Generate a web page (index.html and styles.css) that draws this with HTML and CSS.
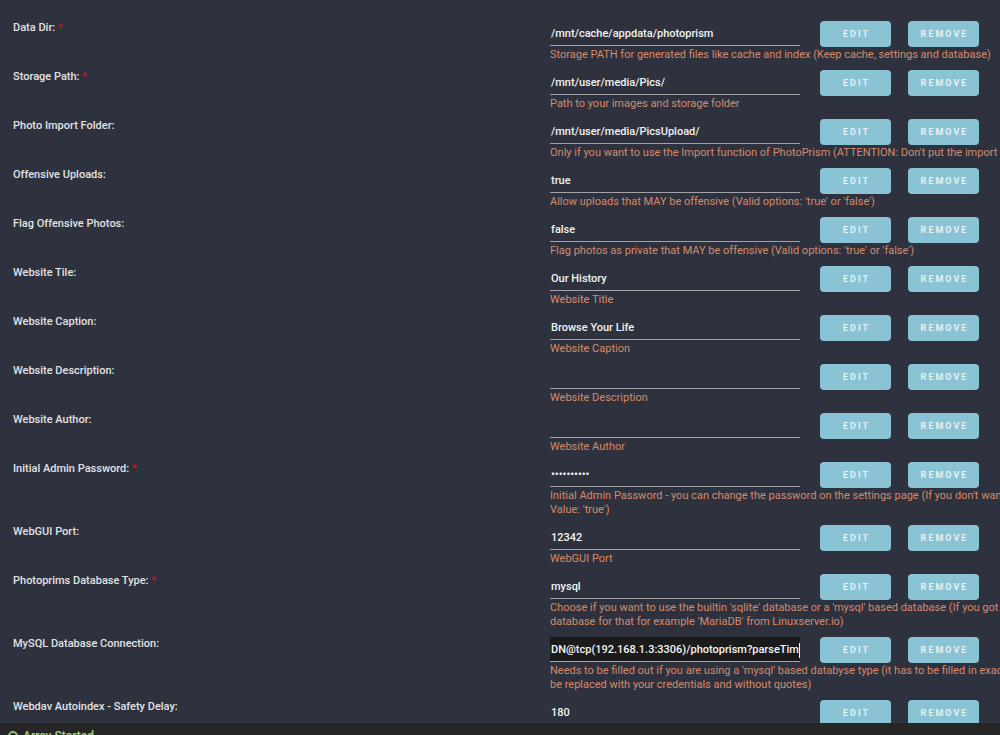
FILE: index.html
```html
<!DOCTYPE html>
<html>
<head>
  <title>Update Container</title>
  <link rel="stylesheet" href="styles.css">
</head>
<body>
  <div class="settings">

    <div class="setting">
      <div class="setting-label">Data Dir: <span class="required">*</span></div>
      <div class="setting-body">
        <div class="setting-top">
          <div class="setting-value">/mnt/cache/appdata/photoprism</div>
          <button class="btn">Edit</button>
          <button class="btn">Remove</button>
        </div>
        <div class="setting-desc">Storage PATH for generated files like cache and index (Keep cache, settings and database)</div>
      </div>
    </div>

    <div class="setting">
      <div class="setting-label">Storage Path: <span class="required">*</span></div>
      <div class="setting-body">
        <div class="setting-top">
          <div class="setting-value">/mnt/user/media/Pics/</div>
          <button class="btn">Edit</button>
          <button class="btn">Remove</button>
        </div>
        <div class="setting-desc">Path to your images and storage folder</div>
      </div>
    </div>

    <div class="setting">
      <div class="setting-label">Photo Import Folder:</div>
      <div class="setting-body">
        <div class="setting-top">
          <div class="setting-value">/mnt/user/media/PicsUpload/</div>
          <button class="btn">Edit</button>
          <button class="btn">Remove</button>
        </div>
        <div class="setting-desc">Only if you want to use the Import function of PhotoPrism (ATTENTION: Don't put the import folder inside the originals folder)</div>
      </div>
    </div>

    <div class="setting">
      <div class="setting-label">Offensive Uploads:</div>
      <div class="setting-body">
        <div class="setting-top">
          <div class="setting-value">true</div>
          <button class="btn">Edit</button>
          <button class="btn">Remove</button>
        </div>
        <div class="setting-desc">Allow uploads that MAY be offensive (Valid options: 'true' or 'false')</div>
      </div>
    </div>

    <div class="setting">
      <div class="setting-label">Flag Offensive Photos:</div>
      <div class="setting-body">
        <div class="setting-top">
          <div class="setting-value">false</div>
          <button class="btn">Edit</button>
          <button class="btn">Remove</button>
        </div>
        <div class="setting-desc">Flag photos as private that MAY be offensive (Valid options: 'true' or 'false')</div>
      </div>
    </div>

    <div class="setting">
      <div class="setting-label">Website Tile:</div>
      <div class="setting-body">
        <div class="setting-top">
          <div class="setting-value">Our History</div>
          <button class="btn">Edit</button>
          <button class="btn">Remove</button>
        </div>
        <div class="setting-desc">Website Title</div>
      </div>
    </div>

    <div class="setting">
      <div class="setting-label">Website Caption:</div>
      <div class="setting-body">
        <div class="setting-top">
          <div class="setting-value">Browse Your Life</div>
          <button class="btn">Edit</button>
          <button class="btn">Remove</button>
        </div>
        <div class="setting-desc">Website Caption</div>
      </div>
    </div>

    <div class="setting">
      <div class="setting-label">Website Description:</div>
      <div class="setting-body">
        <div class="setting-top">
          <div class="setting-value"></div>
          <button class="btn">Edit</button>
          <button class="btn">Remove</button>
        </div>
        <div class="setting-desc">Website Description</div>
      </div>
    </div>

    <div class="setting">
      <div class="setting-label">Website Author:</div>
      <div class="setting-body">
        <div class="setting-top">
          <div class="setting-value"></div>
          <button class="btn">Edit</button>
          <button class="btn">Remove</button>
        </div>
        <div class="setting-desc">Website Author</div>
      </div>
    </div>

    <div class="setting">
      <div class="setting-label">Initial Admin Password: <span class="required">*</span></div>
      <div class="setting-body">
        <div class="setting-top">
          <div class="setting-value password">&bull;&bull;&bull;&bull;&bull;&bull;&bull;&bull;&bull;&bull;</div>
          <button class="btn">Edit</button>
          <button class="btn">Remove</button>
        </div>
        <div class="setting-desc">Initial Admin Password - you can change the password on the settings page (If you don't want a password set this to Public and the<br>Value: 'true')</div>
      </div>
    </div>

    <div class="setting">
      <div class="setting-label">WebGUI Port:</div>
      <div class="setting-body">
        <div class="setting-top">
          <div class="setting-value">12342</div>
          <button class="btn">Edit</button>
          <button class="btn">Remove</button>
        </div>
        <div class="setting-desc">WebGUI Port</div>
      </div>
    </div>

    <div class="setting">
      <div class="setting-label">Photoprims Database Type: <span class="required">*</span></div>
      <div class="setting-body">
        <div class="setting-top">
          <div class="setting-value">mysql</div>
          <button class="btn">Edit</button>
          <button class="btn">Remove</button>
        </div>
        <div class="setting-desc">Choose if you want to use the builtin 'sqlite' database or a 'mysql' based database (If you got no database you have to setup a<br>database for that for example 'MariaDB' from Linuxserver.io)</div>
      </div>
    </div>

    <div class="setting">
      <div class="setting-label">MySQL Database Connection:</div>
      <div class="setting-body">
        <div class="setting-top">
          <div class="setting-value focused">DN@tcp(192.168.1.3:3306)/photoprism?parseTim<span class="caret"></span></div>
          <button class="btn">Edit</button>
          <button class="btn">Remove</button>
        </div>
        <div class="setting-desc">Needs to be filled out if you are using a 'mysql' based databyse type (it has to be filled in exactly like that, the USER and PASSWORD have to<br>be replaced with your credentials and without quotes)</div>
      </div>
    </div>

    <div class="setting">
      <div class="setting-label">Webdav Autoindex - Safety Delay:</div>
      <div class="setting-body">
        <div class="setting-top">
          <div class="setting-value">180</div>
          <button class="btn">Edit</button>
          <button class="btn">Remove</button>
        </div>
        <div class="setting-desc">Safety delay for Webdav autoindex</div>
      </div>
    </div>

  </div>

  <div class="footer">
    <span class="status-dot"></span>
    <span class="status-text">Array Started</span>
  </div>
</body>
</html>
```

FILE: styles.css
```css
body {
  margin: 0;
  padding: 21px 0 0 0;
  background-color: #2d323e;
  font-family: Roboto, "Noto Sans", sans-serif;
  overflow: hidden;
}

.settings {
  width: 1400px;
}

.setting {
  display: flex;
  margin-bottom: 8px;
}

.setting-label {
  width: 550px;
  padding-left: 13px;
  box-sizing: border-box;
  color: #e2e2e2;
  font-size: 11px;
  font-weight: 500;
  line-height: 14px;
}

.required {
  color: #c8161d;
}

.setting-body {
  flex: 1;
}

.setting-top {
  display: flex;
  align-items: flex-start;
  height: 27px;
}

.setting-value {
  width: 249px;
  height: 24px;
  line-height: 25px;
  padding-left: 1px;
  border-bottom: 1px solid #a2a4aa;
  color: #f2f2f2;
  font-size: 11px;
  font-weight: 500;
  white-space: nowrap;
  overflow: hidden;
}

.setting-value.password {
  font-size: 11px;
  letter-spacing: 0;
}

.setting-value.focused {
  background-color: #1b1b1b;
  color: #f5f5f5;
}

.caret {
  display: inline-block;
  width: 1px;
  height: 15px;
  background-color: #f5f5f5;
  vertical-align: middle;
}

.btn {
  width: 71px;
  height: 26px;
  margin-left: 17px;
  padding: 0 0 0 2px;
  border: none;
  border-radius: 4px;
  background-color: #8ac3d3;
  color: #e5f1f5;
  font-family: Roboto, sans-serif;
  font-size: 9px;
  font-weight: bold;
  letter-spacing: 2px;
  text-transform: uppercase;
}

.setting-value + .btn {
  margin-left: 20px;
}

.setting-desc {
  color: #d68a6c;
  font-size: 11px;
  line-height: 14px;
  white-space: nowrap;
}

.footer {
  position: fixed;
  left: 0;
  right: 0;
  bottom: -14px;
  height: 26px;
  background-color: #262626;
  display: flex;
  align-items: center;
  padding-left: 8px;
  box-sizing: border-box;
}

.status-dot {
  width: 6px;
  height: 6px;
  border: 2px solid #8fc06a;
  border-radius: 50%;
  margin-right: 5px;
}

.status-text {
  color: #a4d27a;
  font-size: 12px;
  font-weight: 500;
}
```
